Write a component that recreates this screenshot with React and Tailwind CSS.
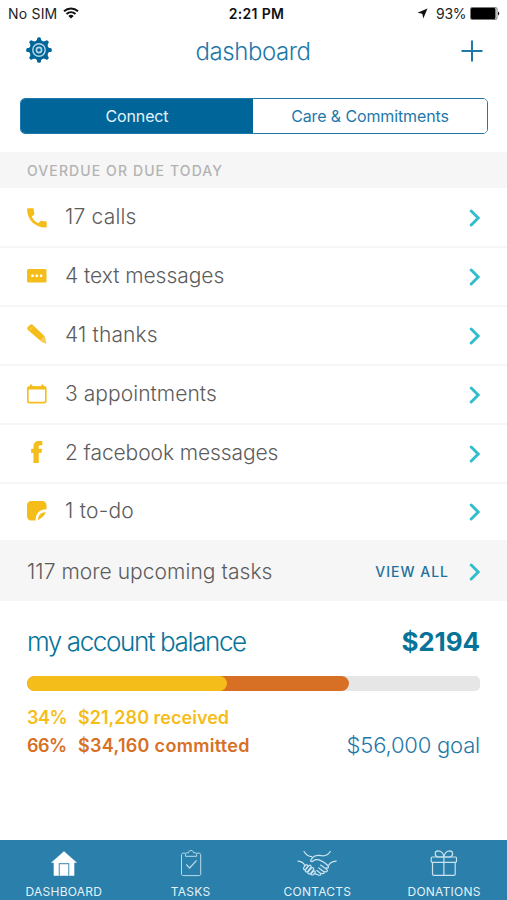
const tasks = [
  { label: '17 calls', icon: PhoneIcon, track: 'tracking-[0.2px]' },
  { label: '4 text messages', icon: TextIcon, track: 'tracking-[-0.05px]' },
  { label: '41 thanks', icon: PencilIcon, track: 'tracking-[0.15px]' },
  { label: '3 appointments', icon: CalendarIcon, track: 'tracking-[0.05px]' },
  { label: '2 facebook messages', icon: FacebookIcon, track: 'tracking-[-0.09px]' },
  { label: '1 to-do', icon: NoteIcon, track: 'tracking-[0.25px]' },
]

const tabs = [
  { label: 'DASHBOARD', icon: HomeIcon },
  { label: 'TASKS', icon: ClipboardIcon },
  { label: 'CONTACTS', icon: HandshakeIcon },
  { label: 'DONATIONS', icon: GiftIcon },
]

const balance = { received: 44.2, total: 71.1 }

function PhoneIcon() {
  return (
    <svg width="20" height="20" viewBox="0 0 20 20" fill="currentColor">
      <path d="M1.1 0.3h4.6c.7 0 1.1.5 1.1 1.1 0 1.4.2 2.7.6 3.9.1.4 0 .8-.3 1.1L4.7 8.7c1.6 3.1 3.5 5 6.6 6.6l2.3-2.3c.3-.3.7-.4 1.1-.3 1.2.4 2.5.6 3.9.6.6 0 1.1.4 1.1 1.1V18.5c0 .6-.5 1.1-1.1 1.1C8.3 19.6.1 11.5.1 1.4.1.8.5.3 1.1.3z" />
    </svg>
  )
}

function TextIcon() {
  return (
    <svg width="20" height="14" viewBox="0 0 20 14" className="mb-[2px]">
      <rect width="19.5" height="13.5" rx="1.5" fill="currentColor" />
      <g fill="#fff">
        <rect x="4.3" y="5.6" width="2.4" height="2.4" rx=".5" />
        <rect x="8.6" y="5.6" width="2.4" height="2.4" rx=".5" />
        <rect x="12.9" y="5.6" width="2.4" height="2.4" rx=".5" />
      </g>
    </svg>
  )
}

function PencilIcon() {
  return (
    <svg width="20" height="20" viewBox="0 0 20 20" fill="currentColor" className="mb-[4px]">
      <path d="M.6 3.3L2.900.9c.8-.8 1.900-.8 2.700-.1L17.600 12.200l-4.200 4.500L.9 5.900C.2 5.200 0 4.100.6 3.300z" />
      <path d="M17.600 12.200c.9 1.900 1.500 4.100 1.700 6.300 0 .6-.4 1-1 .9-1.900-.3-3.700-1.200-4.900-2.700z" fillOpacity=".75" />
      <path d="M2.400 6.300L5.900 2.300" fill="none" stroke="#fff" strokeWidth=".6" strokeOpacity=".6" />
    </svg>
  )
}

function CalendarIcon() {
  return (
    <svg width="20" height="20" viewBox="0 0 20 20" className="mb-[2px]">
      <rect x=".8" y="3" width="18" height="15.6" rx="1.8" fill="none" stroke="currentColor" strokeWidth="1.6" />
      <path d="M1 2.5h2V.4h2.2v2.1h9.2V.4h2.2v2.1h2v3H1z" fill="currentColor" />
    </svg>
  )
}

function FacebookIcon() {
  return (
    <svg width="12" height="22" viewBox="0 0 12 22" fill="currentColor" className="mb-[3px]">
      <path d="M2.7 22V11.8H.2V8h2.5V5.4C2.7 2 4.900 0 8.200 0c1.500 0 2.900.2 2.900.2v3.900H9.500C8 4.100 7.600 4.900 7.600 6v2h3.300l-.6 3.800H7.600V22z" stroke="currentColor" strokeWidth=".4" />
    </svg>
  )
}

function NoteIcon() {
  return (
    <svg width="20" height="20" viewBox="0 0 20 20" className="mb-[2px]">
      <path d="M4 0h11.5c2.2 0 4 1.8 4 4v4.2C12.3 8.4 8.4 12.8 8.6 19.5H4c-2.2 0-4-1.8-4-4V4c0-2.2 1.8-4 4-4z" fill="currentColor" />
      <path d="M18.9 11.3c-1.6 3.6-4.2 6-7.9 7.7 0-2.3.5-4.1 1.9-5.500 1.400-1.500 3.300-2.300 6-2.200z" fill="currentColor" />
    </svg>
  )
}

function GearIcon() {
  return (
    <svg width="26" height="26" viewBox="-13 -13 26 26" className="-mt-[2px]">
      <g fill="#006699">
        {[0, 45, 90, 135].map(a => (
          <g key={a} transform={`rotate(${a})`}>
            <rect x="-1.9" y="-12.8" width="3.8" height="25.6" rx="1.5" />
            <path d="M-1.6-11L-3.8-8V8l2.2 3h3.2l2.2-3V-8L1.6-11z" />
          </g>
        ))}
        <circle r="9.6" />
      </g>
      <circle r="6.2" fill="none" stroke="#b9d8e7" strokeWidth="1.4" />
      <circle r="2.6" fill="#006699" stroke="#b9d8e7" strokeWidth="1.6" />
    </svg>
  )
}

function HomeIcon() {
  return (
    <svg width="28" height="28" viewBox="0 0 28 28">
      <path d="M14 1.3L27 12.8h-2.7V25.8H3.7V12.8H1z" fill="#fff" />
      <path d="M9.3 25.8V13.7h9.4v12.1" fill="none" stroke="#5f9fc0" strokeWidth="1.2" />
    </svg>
  )
}

function ClipboardIcon() {
  return (
    <svg width="28" height="28" viewBox="0 0 28 28" fill="none" stroke="#b9dbea" strokeWidth="1">
      <path d="M8.5 3.2H6.1c-.9 0-1.6.6-1.6 1.5v19.4c0 .9.7 1.5 1.6 1.5h16c.9 0 1.6-.6 1.6-1.5V4.7c0-.9-.7-1.5-1.6-1.5h-2.5" />
      <path d="M8.5 6.3V4.5c0-1 .7-1.7 1.7-1.7h1.2C11.7 1.3 12.7.5 14 .5s2.3.8 2.6 2.3h1.3c1 0 1.7.7 1.7 1.7v1.8z" />
      <path d="M9.2 14.3l3.4 3.7 7-7.7" strokeWidth="1.2" />
    </svg>
  )
}

function HandshakeIcon() {
  return (
    <svg width="40" height="28" viewBox="0 0 40 28" fill="none" stroke="#cde5f0" strokeWidth="1.2" strokeLinecap="round" strokeLinejoin="round">
      <path d="M7 1.5c1.8 3 3.9 4.9 7.8 5.1" />
      <path d="M33.3 1.5c-2.6 3.9-5.3 4.8-8.6 4.2-4.3-.9-7.7-.1-9.2 1.9l-1.7 2.7c-.8 1.3 1.1 1.7 2.7.5l1.7-1.1c4.3-.7 7.5 1 12.3 5.6 2 1.9.6 3.5-1.2 2.4" />
      <path d="M1 11.1c4.2.5 6.2 2 6.7 4.7M39.2 11.1c-4 .5-6.5 1.6-7.5 4.2" />
      <path d="M7.7 15.9c1.5-2.3 3.6-.9 2.8.6l-2 2.9c-1.5.8-2.5-.5-1.8-1.7zM8.5 19.8l3.3-4.1c1.7-1.2 3 .4 2 1.7l-3.3 4.3c-1.6.8-2.9-.5-2-1.9zM10.9 22l3.5-3.9c1.7-1 3 .4 2 1.7l-2.7 3.6c-1.7 1-3.5.1-2.8-1.4zM13.9 24l2.5-2.7c1.5-.9 2.5.4 1.6 1.5l-1.6 1.9c-1.4.7-2.7.1-2.5-.7z" />
      <path d="M23.6 15.1l5.8 4.2c2 1.7.2 3.2-1.5 2.2M21.8 17.9l4.7 3.6c1.8 1.6-.2 2.8-1.7 1.8M19.9 20.5l3.5 2.7c1.2 1.5-.5 2.5-2 1.8l-3.7-1.4" />
    </svg>
  )
}

function GiftIcon() {
  return (
    <svg width="28" height="28" viewBox="0 0 28 28" fill="none" stroke="#c8e2ee" strokeWidth="1.2">
      <rect x="1.2" y="7" width="25.3" height="5.3" rx="1" />
      <path d="M2.5 12.3V24c0 .8.6 1.4 1.4 1.4h19.9c.8 0 1.4-.6 1.4-1.4V12.3M13.9 7v18.4" />
      <path d="M13.9 7H7.8C4.1 5.8 4.5.9 8 .8c3.4 0 5.5 3.1 5.9 6.2zM13.9 7H20c3.7-1.2 3.3-6.1-.2-6.2-3.4 0-5.5 3.1-5.9 6.2z" />
    </svg>
  )
}

function Chevron() {
  return (
    <svg width="12" height="18" viewBox="0 0 12 18" fill="none" stroke="#31bdcc" strokeWidth="2.9" strokeLinecap="round">
      <path d="M2.2 2l7 7-7 7" />
    </svg>
  )
}

function StatusBar() {
  return (
    <div className="grid h-[27px] grid-cols-3 items-center text-[14px] text-[#222]">
      <div className="flex items-center gap-[6px] pl-[8px]">
        <span className="tracking-[0.2px]">No SIM</span>
        <svg width="16" height="12" viewBox="0 0 16 12" fill="none" stroke="#111" strokeWidth="1.9" className="-mt-[2px]">
          <path d="M1 4.2c4-3.7 10-3.7 14 0M3.5 7c2.6-2.4 6.4-2.4 9 0" />
          <path d="M8 11.5L5.3 8.9c1.5-1.4 3.9-1.4 5.4 0z" fill="#111" stroke="none" />
        </svg>
      </div>
      <div className="text-center font-semibold tracking-[0.3px] text-[#111]"><span className="pl-[6px]">2:21 PM</span></div>
      <div className="flex items-center justify-end pr-[7px]">
        <svg width="11" height="11" viewBox="0 0 11 11" className="mr-[8px] -mt-px">
          <path d="M10.5.5L6.3 10.5 5.3 5.7.5 4.7z" fill="#111" />
        </svg>
        <span className="mr-[4px] tracking-[-0.4px]">93%</span>
        <svg width="30" height="13" viewBox="0 0 30 13" className="-mt-px">
          <rect x=".5" y=".5" width="26.5" height="12" rx="1.5" fill="#fff" stroke="#555" strokeWidth=".8" />
          <rect x="1" y="1" width="24.5" height="11" rx="1" fill="#000" />
          <path d="M28 4.5c1.7.6 1.7 3.4 0 4z" fill="#111" />
        </svg>
      </div>
    </div>
  )
}

export default function App() {
  return (
    <div className="flex h-[900px] w-[507px] flex-col overflow-hidden bg-white font-['Inter',sans-serif]">
      <StatusBar />

      <header className="mt-px flex h-[46px] items-center justify-between pr-[24px] pl-[26px]">
        <GearIcon />
        <h1 className="mt-[2px] mr-[7px] text-[24px] font-light tracking-[-0.45px] text-[#1f78a8]">dashboard</h1>
        <svg width="22" height="22" viewBox="0 0 22 22" stroke="#1f78a8" strokeWidth="2">
          <path d="M11 .5v21M.5 11h21" />
        </svg>
      </header>

      <div className="mt-[24px] mr-[19px] ml-[20px] flex h-[36px] overflow-hidden rounded-[5px] border-[1.5px] border-[#1f78a8] text-[16px]">
        <button className="w-[232px] bg-[#006699] tracking-[-0.15px] text-[#e4f2fa]">Connect</button>
        <button className="flex-1 bg-white tracking-[-0.12px] text-[#1f78a8]">Care &amp; Commitments</button>
      </div>

      <div className="mt-[18px] flex h-[36px] items-center bg-[#f6f6f6] pl-[27px] text-[14px] font-medium tracking-[1.1px] text-[#b3b3b3]">
        OVERDUE OR DUE TODAY
      </div>

      <ul className="pt-px">
        {tasks.map(({ label, icon: Icon, track }) => (
          <li key={label} className="flex h-[59px] items-center border-b-2 border-[#f6f6f6] pr-[26px] pl-[27px] last:h-[58px]">
            <span className="flex w-[20px] justify-center text-[#f4bd19]"><Icon /></span>
            <span className={`ml-[18px] flex-1 pb-[2px] text-[21px] font-light text-[#5c5c5c] ${track}`}>{label}</span>
            <Chevron />
          </li>
        ))}
      </ul>

      <div className="flex h-[59px] items-center bg-[#f6f6f6] pr-[26px] pl-[27px]">
        <span className="flex-1 text-[21px] font-light tracking-[0.05px] text-[#5c5c5c]">117 more upcoming tasks</span>
        <span className="mr-[20px] text-[14px] font-medium tracking-[1px] text-[#1f719c]">VIEW ALL</span>
        <Chevron />
      </div>

      <section className="px-[27px] pt-[20px]">
        <div className="flex h-[40px] items-center justify-between">
          <h2 className="text-[26px] font-light tracking-[-1.4px] text-[#087399]">my account balance</h2>
          <span className="text-[26px] font-bold tracking-[-0.1px] text-[#087399]">$2194</span>
        </div>
        <div className="mt-[15px] grid h-[15px] overflow-hidden rounded-l-[7px] rounded-r-[5px] bg-[#e6e6e6]">
          <div className="col-start-1 row-start-1 rounded-full bg-[#d77024]" style={{ width: `${balance.total}%` }} />
          <div className="col-start-1 row-start-1 rounded-full bg-[#f4bd19]" style={{ width: `${balance.received}%` }} />
        </div>
        <div className="mt-[13px] flex items-end justify-between">
          <div className="text-[18px] leading-[28px] font-semibold">
            <div className="flex text-[#f4bd19]"><span className="w-[51px] tracking-[-0.5px]">34%</span><span className="tracking-[0.02px]">$21,280 received</span></div>
            <div className="flex text-[#d77024]"><span className="w-[51px] tracking-[-0.5px]">66%</span><span className="tracking-[0.3px]">$34,160 committed</span></div>
          </div>
          <span className="pb-px text-[22px] leading-[28px] font-light tracking-[-0.2px] text-[#1f78a8]">$56,000 goal</span>
        </div>
      </section>

      <nav className="mt-auto grid h-[60px] grid-cols-4 bg-[#2b7fab]">
        {tabs.map(({ label, icon: Icon }) => (
          <button key={label} className="flex flex-col items-center pt-[10px] pl-px text-[#e4f2f8]">
            <Icon />
            <span className="mt-[6px] text-[12px] leading-[16px] tracking-[0.25px]">{label}</span>
          </button>
        ))}
      </nav>
    </div>
  )
}
